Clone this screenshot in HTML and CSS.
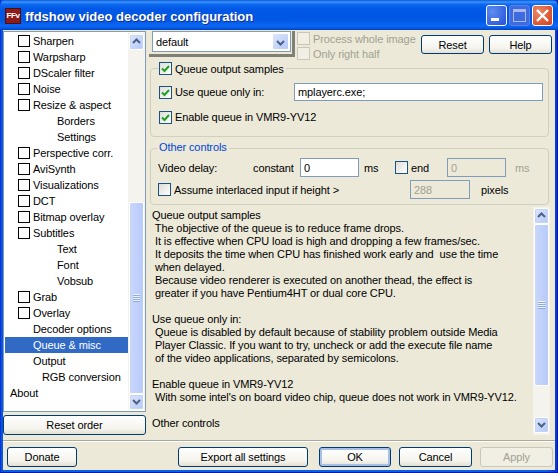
FILE: index.html
```html
<!DOCTYPE html>
<html lang="en">
<head>
  <meta charset="UTF-8">
  <title>ffdshow video decoder configuration</title>
  <link rel="stylesheet" href="styles.css">
</head>
<body>
  <div class="window">
    <div class="titlebar">
      <span class="app-icon">FFv</span>
      <span class="title">ffdshow video decoder configuration</span>
      <span class="caption-btn btn-min"><svg width="21" height="21"><rect x="5" y="13" width="8" height="3" fill="#fff"/></svg></span>
      <span class="caption-btn btn-max off"><svg width="21" height="21"><rect x="4.5" y="4.5" width="12" height="12" fill="none" stroke="#a9b9ee"/><rect x="4" y="4" width="13" height="3" fill="#a9b9ee"/></svg></span>
      <span class="caption-btn btn-close"><svg width="21" height="21"><path d="M5 5l11 11M16 5L5 16" stroke="#fff" stroke-width="2.4"/></svg></span>
    </div>

    <div class="client">
      <div class="main">
        <div class="side">
          <div class="tree">
            <ul class="tree-list">
              <li class="item"><i class="box"></i>Sharpen</li>
              <li class="item"><i class="box"></i>Warpsharp</li>
              <li class="item"><i class="box"></i>DScaler filter</li>
              <li class="item"><i class="box"></i>Noise</li>
              <li class="item"><i class="box"></i>Resize &amp; aspect</li>
              <li class="item sub">Borders</li>
              <li class="item sub">Settings</li>
              <li class="item"><i class="box"></i>Perspective corr.</li>
              <li class="item"><i class="box"></i>AviSynth</li>
              <li class="item"><i class="box"></i>Visualizations</li>
              <li class="item"><i class="box"></i>DCT</li>
              <li class="item"><i class="box"></i>Bitmap overlay</li>
              <li class="item"><i class="box"></i>Subtitles</li>
              <li class="item sub">Text</li>
              <li class="item sub">Font</li>
              <li class="item sub">Vobsub</li>
              <li class="item"><i class="box"></i>Grab</li>
              <li class="item"><i class="box"></i>Overlay</li>
              <li class="item plain">Decoder options</li>
              <li class="item plain selected">Queue &amp; misc</li>
              <li class="item plain">Output</li>
              <li class="item rgb">RGB conversion</li>
              <li class="item top">About</li>
            </ul>
            <div class="scrollbar tree-scroll">
              <span class="sb-btn"><svg width="15" height="15"><path d="M4 9l3.5-3.5L11 9" fill="none" stroke="#4d6185" stroke-width="2"/></svg></span>
              <span class="sb-track tree-track"></span>
              <span class="sb-thumb tree-thumb"><i class="grip"></i></span>
              <span class="sb-btn"><svg width="15" height="15"><path d="M4 6l3.5 3.5L11 6" fill="none" stroke="#4d6185" stroke-width="2"/></svg></span>
            </div>
          </div>
          <button class="btn reset-order">Reset order</button>
        </div>

        <div class="pane">
          <div class="top-row">
            <div class="combo-frame">
              <div class="combo">
                <span class="combo-text">default</span>
                <span class="combo-btn"><svg width="15" height="17"><path d="M4 7l3.5 3.5L11 7" fill="none" stroke="#4d6185" stroke-width="2"/></svg></span>
              </div>
            </div>
            <div class="preset-opts">
              <label class="check off"><i class="cb"></i>Process whole image</label>
              <label class="check off"><i class="cb"></i>Only right half</label>
            </div>
            <button class="btn small">Reset</button>
            <button class="btn small">Help</button>
          </div>

          <fieldset class="group queue-group">
            <legend class="check"><i class="cb on"><svg width="11" height="11"><path d="M2 5.5l2.5 2.5L9 3" fill="none" stroke="#21a121" stroke-width="2"/></svg></i>Queue output samples</legend>
            <div class="row use-row">
              <label class="check use-label"><i class="cb on"><svg width="11" height="11"><path d="M2 5.5l2.5 2.5L9 3" fill="none" stroke="#21a121" stroke-width="2"/></svg></i>Use queue only in:</label>
              <input class="field exe" value="mplayerc.exe;">
            </div>
            <div class="row">
              <label class="check"><i class="cb on"><svg width="11" height="11"><path d="M2 5.5l2.5 2.5L9 3" fill="none" stroke="#21a121" stroke-width="2"/></svg></i>Enable queue in VMR9-YV12</label>
            </div>
          </fieldset>

          <fieldset class="group other-group">
            <legend class="legend-text">Other controls</legend>
            <div class="row delay-row">
              <span class="delay-label">Video delay:</span>
              <span class="constant">constant</span>
              <input class="field delay" value="0">
              <span class="ms">ms</span>
              <label class="check end"><i class="cb"></i>end</label>
              <input class="field delay dis" value="0" disabled>
              <span class="ms grey">ms</span>
            </div>
            <div class="row height-row">
              <label class="check interlaced"><i class="cb"></i>Assume interlaced input if height &gt;</label>
              <input class="field px dis" value="288" disabled>
              <span class="pixels">pixels</span>
            </div>
          </fieldset>

          <div class="help">
            <pre class="help-text">Queue output samples
 The objective of the queue is to reduce frame drops.
 It is effective when CPU load is high and dropping a few frames/sec.
 It deposits the time when CPU has finished work early and  use the time
 when delayed.
 Because video renderer is executed on another thead, the effect is
 greater if you have Pentium4HT or dual core CPU.

Use queue only in:
 Queue is disabled by default because of stability problem outside Media
 Player Classic. If you want to try, uncheck or add the execute file name
 of the video applications, separated by semicolons.

Enable queue in VMR9-YV12
 With some intel's on board video chip, queue does not work in VMR9-YV12.

Other controls</pre>
            <div class="scrollbar help-scroll">
              <span class="sb-btn"><svg width="15" height="15"><path d="M4 9l3.5-3.5L11 9" fill="none" stroke="#4d6185" stroke-width="2"/></svg></span>
              <span class="sb-thumb help-thumb"><i class="grip"></i></span>
              <span class="sb-track help-track"></span>
              <span class="sb-btn"><svg width="15" height="15"><path d="M4 6l3.5 3.5L11 6" fill="none" stroke="#4d6185" stroke-width="2"/></svg></span>
            </div>
          </div>
        </div>
      </div>

      <div class="footer">
        <button class="btn donate">Donate</button>
        <button class="btn export">Export all settings</button>
        <button class="btn action default">OK</button>
        <button class="btn action">Cancel</button>
        <button class="btn action off" disabled>Apply</button>
      </div>
    </div>
  </div>
</body>
</html>
```

FILE: styles.css
```css
* {
  box-sizing: border-box;
}
html, body {
  margin: 0;
  padding: 0;
}
body {
  width: 558px;
  height: 473px;
  overflow: hidden;
  font-family: "Liberation Sans", "Noto Sans", sans-serif;
  font-size: 11px;
  letter-spacing: -0.1px;
  color: #000;
  background: #fff;
}

.window {
  width: 558px;
  height: 473px;
  display: flex;
  flex-direction: column;
  padding: 0 2px 2px;
  border-left: 1px solid #0831d9;
  border-right: 1px solid #001ea0;
  border-bottom: 1px solid #001ea0;
  background: linear-gradient(90deg, #0855dd, #0a5fe8 2%, #0a5fe8 98%, #0831d9);
}

/* title bar */
.titlebar {
  height: 30px;
  flex: none;
  margin: 0 -3px;
  padding: 0 5px 0 5px;
  display: flex;
  align-items: center;
  background: linear-gradient(180deg, #0a57d8 0, #3d95ff 2px, #0f6cf0 4px, #0058e6 9px, #0257e3 20px, #0a68f5 26px, #0451d6 29px, #0339b8 30px);
  border-radius: 6px 6px 0 0;
}
.app-icon {
  width: 16px;
  height: 16px;
  flex: none;
  margin-top: 1px;
  background: #8c1c1c;
  border: 1px solid #4a0f0f;
  color: #fff;
  font: bold 8px/14px "Liberation Sans", sans-serif;
  letter-spacing: -0.4px;
  text-align: center;
}
.title {
  flex: 1;
  margin: 2px 0 0 4px;
  color: #fff;
  font: bold 13px "Liberation Sans", sans-serif;
  letter-spacing: 0;
  text-shadow: 1px 1px #0f2f9a;
}
.caption-btn {
  width: 21px;
  height: 21px;
  margin-left: 2px;
  border: 1px solid #fff;
  border-radius: 3px;
  display: block;
  overflow: hidden;
}
.caption-btn svg {
  display: block;
  margin: -1px;
}
.btn-min {
  background: radial-gradient(circle at 30% 30%, #5f8df0, #2350d8);
}
.btn-max.off {
  background: #3f6be0;
  border-color: #5a80e6;
}
.btn-close {
  background: radial-gradient(circle at 30% 30%, #ea8a66, #d43c18);
}

.client {
  flex: 1;
  display: flex;
  flex-direction: column;
  background: #ece9d8;
}
.main {
  height: 405px;
  flex: none;
  display: flex;
}

/* left filter tree */
.side {
  width: 143px;
  flex: none;
  padding-top: 1px;
}
.tree {
  height: 381px;
  border: 1px solid #7f9db9;
  display: flex;
  background: #fff;
  padding: 1px;
}
.tree-list {
  list-style: none;
  margin: 0;
  padding: 0;
  width: 123px;
  flex: none;
  overflow: hidden;
}
.item {
  height: 16px;
  line-height: 16px;
  padding-left: 13px;
  display: flex;
  align-items: center;
  white-space: nowrap;
}
.box {
  width: 12px;
  height: 12px;
  margin-right: 3px;
  border: 1px solid #000;
  background: #fff;
  flex: none;
}
.sub {
  padding-left: 52px;
}
.plain {
  padding-left: 28px;
}
.rgb {
  padding-left: 37px;
}
.top {
  padding-left: 5px;
}
.selected {
  background: #316ac5;
  color: #fff;
}

/* scrollbars */
.scrollbar {
  width: 17px;
  flex: none;
  display: flex;
  flex-direction: column;
  background: #f4f3ee;
  padding: 1px;
}
.sb-btn {
  width: 15px;
  height: 16px;
  flex: none;
  border: 1px solid #fff;
  border-radius: 2px;
  background: linear-gradient(135deg, #dce6fd, #b4c8f7);
  box-shadow: inset 0 0 0 1px #c4d4f8;
}
.sb-btn svg {
  display: block;
  margin: -1px 0 0 -1px;
}
.sb-thumb {
  width: 15px;
  flex: none;
  border: 1px solid #fff;
  border-radius: 2px;
  background: linear-gradient(90deg, #c9d7fb, #b8caf9);
  display: flex;
  flex-direction: column;
  justify-content: center;
  align-items: center;
}
.grip {
  width: 7px;
  height: 8px;
  background: repeating-linear-gradient(180deg, #eef3fe 0 1px, #8fa9e6 1px 2px);
}
.sb-track {
  display: block;
}
.tree-track {
  height: 152px;
  flex: none;
}
.tree-thumb {
  height: 192px;
}
.help-track {
  height: 31px;
  flex: none;
}
.help-thumb {
  height: 162px;
}

.btn {
  font: inherit;
  letter-spacing: inherit;
  color: #000;
  height: 20px;
  padding: 0;
  border: 1px solid #003c74;
  border-radius: 3px;
  background: linear-gradient(180deg, #fff, #f5f4ee 70%, #e3e0d3);
}
.btn.off {
  border-color: #c9c7ba;
  color: #a1a192;
  background: #f1efe3;
}
.btn.default {
  box-shadow: inset 0 0 0 2px #a8bfe8;
}
.reset-order {
  width: 143px;
  margin-top: 3px;
}

/* right pane */
.pane {
  flex: 1;
  padding: 1px 0 0 5px;
  min-width: 0;
}
.top-row {
  display: flex;
  height: 26px;
  margin-left: -2px;
}
.combo-frame {
  width: 146px;
  height: 26px;
  flex: none;
  border-right: 3px solid #808075;
  border-bottom: 3px solid #808075;
}
.combo {
  width: 139px;
  height: 21px;
  margin-left: 3px;
  border: 1px solid #7f9db9;
  background: #fff;
  display: flex;
  align-items: center;
  justify-content: space-between;
  padding: 1px;
}
.combo-text {
  padding-left: 2px;
}
.combo-btn {
  width: 17px;
  height: 17px;
  border: 1px solid #fff;
  border-radius: 2px;
  background: linear-gradient(135deg, #dce6fd, #b4c8f7);
}
.combo-btn svg {
  display: block;
}
.preset-opts {
  width: 126px;
  flex: none;
  padding-left: 2px;
}
.preset-opts .check {
  height: 15px;
}
.btn.small {
  width: 63px;
  height: 19px;
  margin: 4px 5px 0 0;
  flex: none;
}

.check {
  display: flex;
  align-items: center;
  white-space: nowrap;
}
.check.off {
  color: #a1a192;
}
.cb {
  width: 13px;
  height: 13px;
  margin-right: 3px;
  flex: none;
  display: block;
  border: 1px solid #1c5180;
  background: linear-gradient(135deg, #dcdcd7, #fff);
}
.cb svg {
  display: block;
}
.check.off .cb {
  border-color: #c9c7ba;
  background: #f1efe3;
}

.group {
  margin: 0;
  border: 1px solid #d0d0bf;
  border-radius: 4px;
  min-width: 0;
}
.group legend {
  height: 15px;
}
.queue-group {
  width: 399px;
  height: 76px;
  margin: 4px 0 0 -1px;
  padding: 0 5px 0 8px;
}
.queue-group legend {
  padding: 0 2px 0 0;
  margin-left: 0;
}
.row {
  display: flex;
  align-items: center;
}
.use-row {
  height: 18px;
  margin-top: 7px;
}
.use-row + .row {
  margin-top: 8px;
  height: 16px;
}
.use-label {
  width: 135px;
  flex: none;
}
.field {
  font: inherit;
  letter-spacing: inherit;
  color: #000;
  background: #fff;
  border: 1px solid #7f9db9;
  padding: 0 3px;
  height: 18px;
  outline: none;
}
.field.dis {
  background: #ece9d8;
  color: #a1a192;
}
.exe {
  width: 249px;
}

.other-group {
  width: 399px;
  height: 64px;
  margin: 4px 0 0 -1px;
  padding: 0 6px 0 7px;
}
.legend-text {
  color: #0046d5;
  padding: 0 2px;
  margin-left: -1px;
}
.delay-row {
  height: 19px;
  margin-top: 2px;
}
.delay-label {
  width: 95px;
  flex: none;
}
.constant {
  width: 47px;
  flex: none;
}
.delay {
  width: 59px;
  height: 19px;
}
.ms {
  width: 31px;
  margin-left: 5px;
  flex: none;
}
.ms.grey {
  color: #a1a192;
  margin-left: 9px;
}
.end {
  width: 52px;
  flex: none;
}
.height-row {
  margin-top: 3px;
  height: 19px;
}
.interlaced {
  width: 252px;
  flex: none;
}
.px {
  width: 60px;
  height: 19px;
}
.pixels {
  margin-left: 11px;
}

.help {
  display: flex;
  width: 402px;
  height: 228px;
  margin: 2px 0 0 -3px;
}
.help-text {
  flex: 1;
  margin: 0;
  padding: 2px 0 0 4px;
  font: inherit;
  letter-spacing: inherit;
  line-height: 13px;
  white-space: pre;
  overflow: hidden;
}

.footer {
  flex: 1;
  margin-top: 5px;
  border-top: 1px solid #aca899;
  box-shadow: inset 0 1px #fff;
  padding-top: 6px;
  display: flex;
  align-items: flex-start;
}
.donate {
  width: 70px;
  margin-left: 4px;
}
.export {
  width: 130px;
  margin-left: 101px;
}
.action {
  width: 73px;
  margin-left: 8px;
}
.action.default {
  width: 72px;
  margin-left: 11px;
}
```
